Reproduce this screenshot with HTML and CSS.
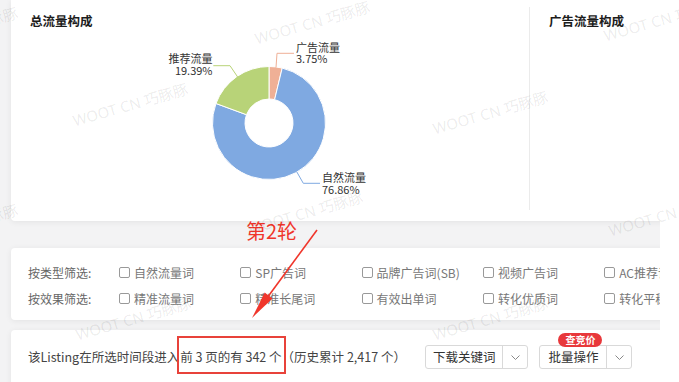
FILE: index.html
```html
<!DOCTYPE html>
<html lang="zh-CN">
<head>
<meta charset="utf-8">
<title>流量构成</title>
<link rel="stylesheet" href="styles.css">
</head>
<body>
<div class="page">
  <div class="viewport">
    <section class="card overview">
      <div class="panel total">
        <h3 class="title">总流量构成</h3>
        <svg class="donut" width="518" height="190" viewBox="0 0 518 190">
          <path d="M258,37.5 A56.5,56.5 0 0 1 271.19,39.06 L263.6,70.66 A24,24 0 0 0 258,70 Z" fill="#efb096" stroke="#fff" stroke-width="1"/>
          <path d="M271.19,39.06 A56.5,56.5 0 1 1 204.97,74.49 L235.48,85.71 A24,24 0 1 0 263.6,70.66 Z" fill="#7fa9e1" stroke="#fff" stroke-width="1"/>
          <path d="M204.97,74.49 A56.5,56.5 0 0 1 258,37.5 L258,70 A24,24 0 0 0 235.48,85.71 Z" fill="#b8d378" stroke="#fff" stroke-width="1"/>
          <polyline points="265,38.5 266,24.3 283,24.3" fill="none" stroke="#efb096" stroke-width="1"/>
          <polyline points="227,48.5 219,36.7 202.3,36.7" fill="none" stroke="#b8d378" stroke-width="1"/>
          <polyline points="285.7,142.7 292.3,154.3 309,154.3" fill="none" stroke="#7fa9e1" stroke-width="1"/>
          <text class="lbl" x="285" y="22.5">广告流量</text>
          <text class="lbl" x="285" y="33.5">3.75%</text>
          <text class="lbl" x="201.5" y="33.5" text-anchor="end">推荐流量</text>
          <text class="lbl" x="201.5" y="45.5" text-anchor="end">19.39%</text>
          <text class="lbl" x="311" y="153">自然流量</text>
          <text class="lbl" x="311" y="164.5">76.86%</text>
        </svg>
      </div>
      <div class="divider"></div>
      <div class="panel ads">
        <h3 class="title">广告流量构成</h3>
      </div>
    </section>

    <section class="card filters">
      <div class="filter-row">
        <span class="filter-label">按类型筛选:</span>
        <label class="opt"><span class="box"></span>自然流量词</label>
        <label class="opt"><span class="box"></span>SP广告词</label>
        <label class="opt"><span class="box"></span>品牌广告词(SB)</label>
        <label class="opt"><span class="box"></span>视频广告词</label>
        <label class="opt"><span class="box"></span>AC推荐词</label>
      </div>
      <div class="filter-row">
        <span class="filter-label">按效果筛选:</span>
        <label class="opt"><span class="box"></span>精准流量词</label>
        <label class="opt"><span class="box"></span>精准长尾词</label>
        <label class="opt"><span class="box"></span>有效出单词</label>
        <label class="opt"><span class="box"></span>转化优质词</label>
        <label class="opt"><span class="box"></span>转化平稳词</label>
      </div>
    </section>

    <section class="card summary">
      <p class="summary-text">该Listing在所选时间段进入<span class="hl">前 3 页的有 342 个</span>（历史累计 2,417 个）</p>
      <div class="split">
        <span class="main">下载关键词</span>
        <span class="caret"><svg width="9" height="5" viewBox="0 0 9 5"><polyline points="0.5,0.5 4.5,4.5 8.5,0.5" fill="none" stroke="#888" stroke-width="1"/></svg></span>
      </div>
      <div class="split batch">
        <span class="badge">查竞价</span>
        <span class="main">批量操作</span>
        <span class="caret"><svg width="9" height="5" viewBox="0 0 9 5"><polyline points="0.5,0.5 4.5,4.5 8.5,0.5" fill="none" stroke="#888" stroke-width="1"/></svg></span>
      </div>
    </section>

    <div class="annot-text">第2轮</div>
    <svg class="annot-arrow" width="660" height="382" viewBox="0 0 660 382">
      <line x1="317" y1="230" x2="267" y2="298" stroke="#f0362b" stroke-width="1.6"/>
      <polygon points="252,318 272.5,298.5 264.7,292.5" fill="#f0362b"/>
    </svg>
  </div>

  <div class="watermarks">
    <span class="wm" style="left:-40px;top:28px">WOOT CN 巧豚豚</span>
    <span class="wm" style="left:312px;top:22px">WOOT CN 巧豚豚</span>
    <span class="wm" style="left:661px;top:19px">WOOT CN 巧豚豚</span>
    <span class="wm" style="left:130px;top:104px">WOOT CN 巧豚豚</span>
    <span class="wm" style="left:490px;top:112px">WOOT CN 巧豚豚</span>
    <span class="wm" style="left:-40px;top:225px">WOOT CN 巧豚豚</span>
    <span class="wm" style="left:305px;top:212px">WOOT CN 巧豚豚</span>
    <span class="wm" style="left:666px;top:214px">WOOT CN 巧豚豚</span>
    <span class="wm" style="left:133px;top:318px">WOOT CN 巧豚豚</span>
    <span class="wm" style="left:490px;top:318px">WOOT CN 巧豚豚</span>
  </div>
</div>
</body>
</html>
```

FILE: styles.css
```css
* { box-sizing: border-box; }
html, body { margin: 0; padding: 0; background: #fff; }
body {
  font-family: "Noto Sans", "Noto Sans CJK SC", sans-serif;
  color: #333;
}
.page {
  position: relative;
  width: 679px;
  height: 382px;
  overflow: hidden;
}
.viewport {
  position: relative;
  width: 660px;
  height: 382px;
  overflow: hidden;
  background: #f3f3f4;
}
.card {
  background: #fff;
  border-radius: 4px;
  box-shadow: 0 1px 6px rgba(0, 0, 0, 0.07);
  margin-left: 11px;
  width: 800px;
}
.overview {
  display: flex;
  height: 221px;
  border-radius: 0 0 4px 4px;
}
.panel.total { width: 518px; flex-shrink: 0; }
.panel.total .title { padding-left: 19px; }
.divider {
  width: 1px;
  background: #ebebeb;
  margin: 7px 0 11px;
  flex-shrink: 0;
}
.panel.ads { padding-left: 19px; }
.title {
  margin: 12px 0 0;
  font-family: "Noto Sans CJK SC", sans-serif;
  font-size: 12.5px;
  font-weight: 700;
  line-height: 17px;
  color: #1c1c1c;
}
.donut { display: block; }
.lbl {
  font-family: "Noto Sans CJK SC", sans-serif;
  font-size: 11px;
  fill: #333;
}

.filters {
  margin-top: 27px;
  padding: 11px 0 9px 17px;
  height: 72px;
}
.filter-row {
  display: flex;
  align-items: center;
  height: 26px;
}
.filter-label {
  width: 91px;
  flex-shrink: 0;
  font-family: "Noto Sans CJK SC", sans-serif;
  font-size: 12px;
  color: #666;
}
.opt {
  width: 121.3px;
  flex-shrink: 0;
  display: flex;
  align-items: center;
  gap: 4px;
  white-space: nowrap;
  font-family: "Noto Sans CJK SC", sans-serif;
  font-size: 12px;
  color: #777;
}
.box {
  width: 11px;
  height: 11px;
  border: 1px solid #999;
  border-radius: 2px;
  background: #fff;
  flex-shrink: 0;
}

.summary {
  margin-top: 10px;
  padding: 15px 0 15px 17px;
  height: 70px;
  display: flex;
  align-items: flex-start;
}
.summary-text {
  margin: 0 19px 0 0;
  height: 24px;
  line-height: 24px;
  font-family: "Noto Sans CJK SC", sans-serif;
  font-size: 12.5px;
  color: #444;
  white-space: nowrap;
}
.hl {
  position: relative;
  padding-left: 1px;
}
.hl::after {
  content: "";
  position: absolute;
  left: -2px;
  right: -4px;
  top: -11px;
  bottom: -8px;
  border: 2px solid #e8423a;
}
.split {
  position: relative;
  display: flex;
  height: 24px;
  border: 1px solid #d9d9d9;
  border-radius: 3px;
  background: #fff;
  flex-shrink: 0;
}
.split + .split { margin-left: 11px; }
.split .main {
  padding: 0 7px;
  line-height: 22px;
  border-right: 1px solid #d9d9d9;
  font-family: "Noto Sans CJK SC", sans-serif;
  font-size: 12.5px;
  color: #333;
}
.batch .main { padding: 0 8px; }
.split .caret {
  width: 24px;
  display: flex;
  align-items: center;
  justify-content: center;
}
.badge {
  position: absolute;
  left: 18px;
  top: -13px;
  width: 44px;
  height: 14px;
  border-radius: 7px;
  background: #e8383b;
  color: #fff;
  font-family: "Noto Sans CJK SC", sans-serif;
  font-size: 10px;
  font-weight: 700;
  line-height: 14px;
  text-align: center;
}

.annot-text {
  position: absolute;
  left: 246px;
  top: 217px;
  font-family: "Noto Sans CJK SC", sans-serif;
  font-size: 20px;
  line-height: 28px;
  color: #f0362b;
}
.annot-arrow {
  position: absolute;
  left: 0;
  top: 0;
  pointer-events: none;
}

.watermarks {
  position: absolute;
  left: 0;
  top: 0;
  width: 679px;
  height: 382px;
  pointer-events: none;
}
.wm {
  position: absolute;
  transform: translate(-50%, -50%) rotate(-16deg);
  white-space: nowrap;
  font-family: "Noto Sans", "Noto Sans CJK SC", sans-serif;
  font-size: 15px;
  color: rgba(0, 0, 0, 0.085);
}
```
